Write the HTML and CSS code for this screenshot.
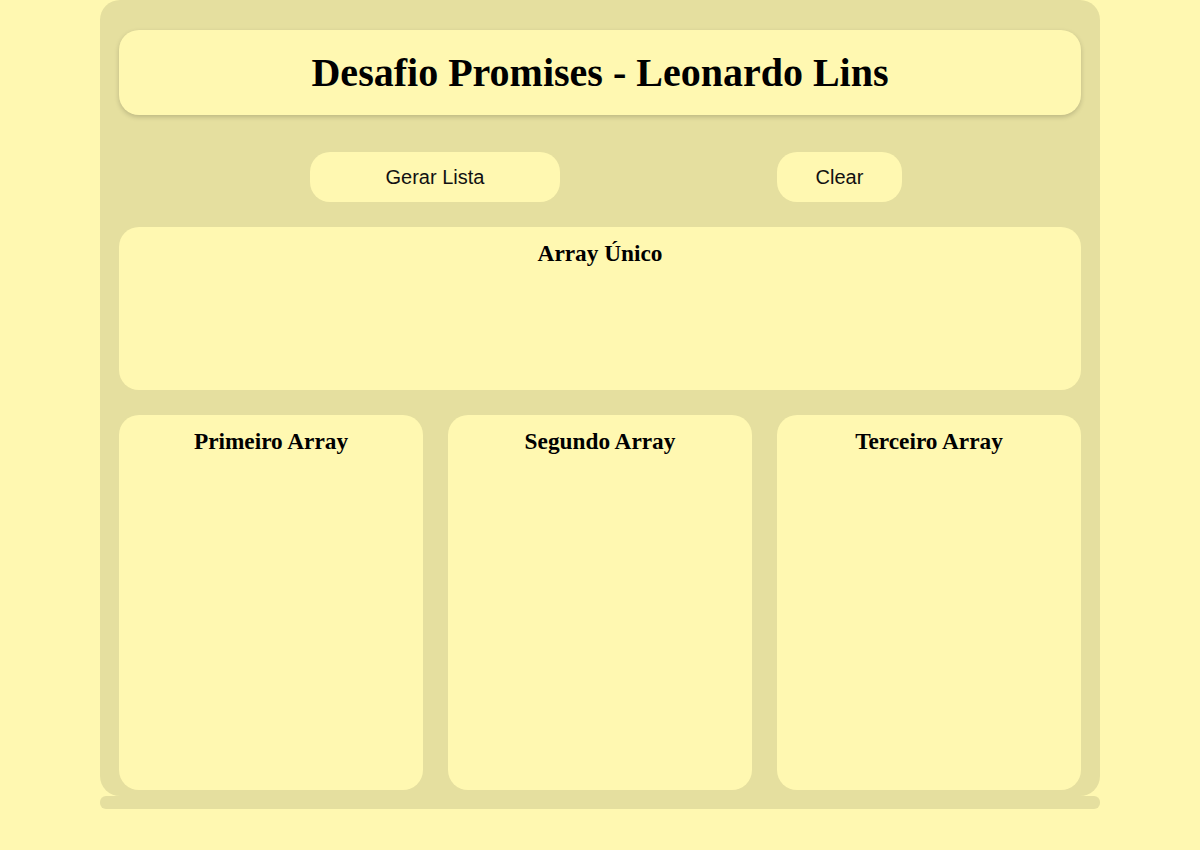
FILE: index.html
```html
<!DOCTYPE html>
<html lang="pt-BR">
<head>
<meta charset="utf-8">
<title>Desafio Promises</title>
<link rel="stylesheet" href="styles.css">
</head>
<body>
<main class="container">
  <header class="header">
    <h1 class="title">Desafio Promises - Leonardo Lins</h1>
  </header>
  <div class="actions">
    <button class="btn btn-gerar">Gerar Lista</button>
    <button class="btn btn-clear">Clear</button>
  </div>
  <section class="card card-unico">
    <h2 class="card-title">Array Único</h2>
  </section>
  <div class="columns">
    <section class="card card-col"><h2 class="card-title">Primeiro Array</h2></section>
    <section class="card card-col"><h2 class="card-title">Segundo Array</h2></section>
    <section class="card card-col"><h2 class="card-title">Terceiro Array</h2></section>
  </div>
</main>
<footer class="footer"></footer>
</body>
</html>
```
FILE: styles.css
```css
html, body {
  margin: 0;
  padding: 0;
}
body {
  background: #fff8b1;
  font-family: "Liberation Serif", "Times New Roman", serif;
  color: #000;
  height: 850px;
  overflow: hidden;
}
.container {
  width: 1000px;
  margin: 0 auto;
  box-sizing: border-box;
  background: #e5df9f;
  border-radius: 20px;
  padding: 30px 19px 6px;
  height: 796px;
}
.header {
  background: #fff8b1;
  border-radius: 20px;
  height: 85px;
  display: flex;
  align-items: center;
  justify-content: center;
  box-shadow: 0 2px 5px rgba(0, 0, 0, 0.18);
}
.title {
  margin: 0;
  font-size: 40px;
  font-weight: bold;
}
.actions {
  display: flex;
  justify-content: center;
  gap: 217px;
  margin: 37px 0 25px 12px;
}
.btn {
  background: #fff8b1;
  border: none;
  border-radius: 20px;
  height: 50px;
  font-family: "Liberation Sans", Arial, sans-serif;
  font-size: 20px;
  color: #111;
  padding: 0;
}
.btn-gerar { width: 250px; }
.btn-clear { width: 125px; }
.card {
  background: #fff8b1;
  border-radius: 20px;
  box-sizing: border-box;
  padding-top: 13px;
}
.card-unico {
  height: 163px;
}
.card-title {
  margin: 0;
  text-align: center;
  font-size: 23.3px;
  font-weight: bold;
}
.columns {
  display: grid;
  grid-template-columns: repeat(3, 1fr);
  gap: 25px;
  margin-top: 25px;
}
.card-col {
  height: 375px;
}
.footer {
  width: 1000px;
  height: 13px;
  margin: 0 auto;
  background: #e5df9f;
  border-radius: 6px;
}
```
